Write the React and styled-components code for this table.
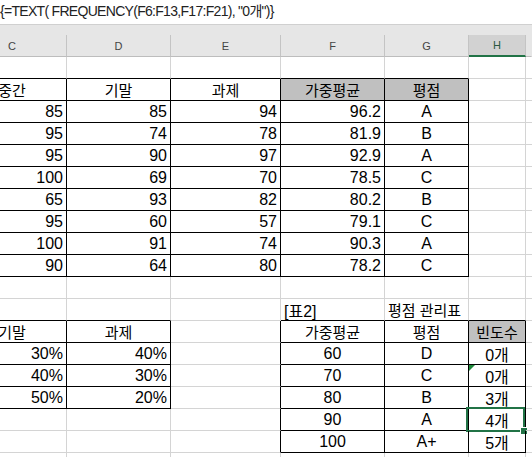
import React from 'react';
import styled, { createGlobalStyle } from 'styled-components';

const GRID = '#d4d4d4';
const INK = '#000';
const EXCEL_GREEN = '#217346';
const WIDTHS = '109px 104px 110px 104px 84px 57px 1fr';

const GlobalStyle = createGlobalStyle`
  html, body {
    margin: 0;
    padding: 0;
    background: #fff;
    overflow: hidden;
  }
  body {
    font-family: "Liberation Sans", "Noto Sans CJK KR", sans-serif;
  }
`;

const Sheet = styled.div`
  width: 532px;
  height: 457px;
  overflow: hidden;
  background: #fff;
`;

const FormulaBar = styled.div`
  height: 24px;
  border-bottom: 1px solid #d0d0d0;
  font-size: 14px;
  letter-spacing: -0.7px;
  line-height: 22px;
  color: #222;
  white-space: nowrap;
`;

const HeaderStrip = styled.div`
  background: #e6e6e6;
  padding-top: 10px;
`;

const Columns = styled.div`
  display: grid;
  grid-template-columns: ${WIDTHS};
  margin-left: -42px;
`;

const ColHead = styled.div`
  height: 22px;
  box-sizing: border-box;
  display: flex;
  align-items: center;
  justify-content: center;
  font-size: 11px;
  color: ${({ $selected }) => ($selected ? '#2a5940' : '#444')};
  background: ${({ $selected }) => ($selected ? '#d2d2d2' : 'transparent')};
  border-right: 1px solid ${({ $last }) => ($last ? 'transparent' : '#c4c4c4')};
  border-bottom: ${({ $selected }) => ($selected ? `2px solid ${EXCEL_GREEN}` : '1px solid #bdbdbd')};
`;

const Cells = styled(Columns)``;

const alignMap = { left: 'flex-start', center: 'center', right: 'flex-end' };

const Cell = styled.div`
  position: relative;
  height: 22px;
  box-sizing: border-box;
  display: flex;
  align-items: center;
  justify-content: ${({ $align }) => alignMap[$align] || 'flex-start'};
  padding: 0 3px;
  font-size: ${({ $ko }) => ($ko ? '15px' : '16px')};
  color: ${INK};
  white-space: nowrap;
  background: ${({ $fill }) => $fill || 'transparent'};
  border-right: 1px solid ${({ $right }) => $right || GRID};
  border-bottom: 1px solid ${({ $bottom }) => $bottom || GRID};
`;

const Selection = styled.div`
  position: absolute;
  left: -3px;
  top: -2px;
  width: 59px;
  height: 25px;
  box-sizing: border-box;
  border: 2px solid ${EXCEL_GREEN};
  pointer-events: none;
`;

const FillHandle = styled.div`
  position: absolute;
  left: 53px;
  top: 19px;
  width: 6px;
  height: 6px;
  background: ${EXCEL_GREEN};
  box-shadow: 0 0 0 1px #fff;
`;

const ErrorMark = styled.div`
  position: absolute;
  left: 0;
  top: 0;
  width: 0;
  height: 0;
  border-top: 6px solid #1f8a3c;
  border-right: 6px solid transparent;
`;

// tables drawn with black borders: [rowStart, rowEnd, colStart, colEnd]
const TABLES = [
  [1, 9, 0, 4],
  [12, 15, 0, 1],
  [12, 17, 3, 5],
];

const ROWS = 19;
const COLS = 7;

const scores = [
  [85, 85, 94, '96.2', 'A'],
  [95, 74, 78, '81.9', 'B'],
  [95, 90, 97, '92.9', 'A'],
  [100, 69, 70, '78.5', 'C'],
  [65, 93, 82, '80.2', 'B'],
  [95, 60, 57, '79.1', 'C'],
  [100, 91, 74, '90.3', 'A'],
  [90, 64, 80, '78.2', 'C'],
];

const weights = [
  ['30%', '40%'],
  ['40%', '30%'],
  ['50%', '20%'],
];

const grades = [
  ['60', 'D', '0개'],
  ['70', 'C', '0개'],
  ['80', 'B', '3개'],
  ['90', 'A', '4개'],
  ['100', 'A+', '5개'],
];

const HEADER_FILL = '#c0c0c0';

function buildCells() {
  const grid = Array.from({ length: ROWS }, () => Array.from({ length: COLS }, () => ({})));
  const put = (r, c, text, align, extra = {}) => {
    grid[r][c] = { text, align, ...extra };
  };

  ['중간', '기말', '과제'].forEach((t, i) => put(1, i, t, 'center', { ko: true }));
  put(1, 3, '가중평균', 'center', { ko: true, fill: HEADER_FILL });
  put(1, 4, '평점', 'center', { ko: true, fill: HEADER_FILL });

  scores.forEach((row, i) => {
    row.forEach((v, c) => put(2 + i, c, v, c === 4 ? 'center' : 'right'));
  });

  put(11, 3, '[표2]', 'left');
  put(11, 4, '평점 관리표', 'left', { ko: true });

  put(12, 0, '기말', 'center', { ko: true });
  put(12, 1, '과제', 'center', { ko: true });
  put(12, 3, '가중평균', 'center', { ko: true });
  put(12, 4, '평점', 'center', { ko: true });
  put(12, 5, '빈도수', 'center', { ko: true, fill: HEADER_FILL });

  weights.forEach((row, i) => row.forEach((v, c) => put(13 + i, c, v, 'right')));
  grades.forEach((row, i) => row.forEach((v, c) => put(13 + i, 3 + c, v, 'center')));

  grid[14][5].error = true;
  grid[16][5].selected = true;

  for (let r = 0; r < ROWS; r++) {
    for (let c = 0; c < COLS; c++) {
      const cell = grid[r][c];
      TABLES.forEach(([r0, r1, c0, c1]) => {
        if (r >= r0 && r <= r1 && c >= c0 - 1 && c <= c1) cell.right = INK;
        if (c >= c0 && c <= c1 && r >= r0 - 1 && r <= r1) cell.bottom = INK;
      });
      if (c === COLS - 1) cell.right = 'transparent';
    }
  }
  return grid;
}

const cells = buildCells();
const letters = ['C', 'D', 'E', 'F', 'G', 'H', ''];

export default function App() {
  return (
    <Sheet>
      <GlobalStyle />
      <FormulaBar>{'{=TEXT( FREQUENCY(F6:F13,F17:F21), "0개")}'}</FormulaBar>
      <HeaderStrip>
        <Columns>
          {letters.map((l, i) => (
            <ColHead key={i} $selected={l === 'H'} $last={i === letters.length - 1}>
              {l}
            </ColHead>
          ))}
        </Columns>
      </HeaderStrip>
      <Cells>
        {cells.map((row, r) =>
          row.map((cell, c) => (
            <Cell
              key={`${r}-${c}`}
              $align={cell.align}
              $ko={cell.ko}
              $fill={cell.fill}
              $right={cell.right}
              $bottom={cell.bottom}
            >
              {cell.error && <ErrorMark />}
              {cell.text}
              {cell.selected && (
                <Selection>
                  <FillHandle />
                </Selection>
              )}
            </Cell>
          ))
        )}
      </Cells>
    </Sheet>
  );
}
